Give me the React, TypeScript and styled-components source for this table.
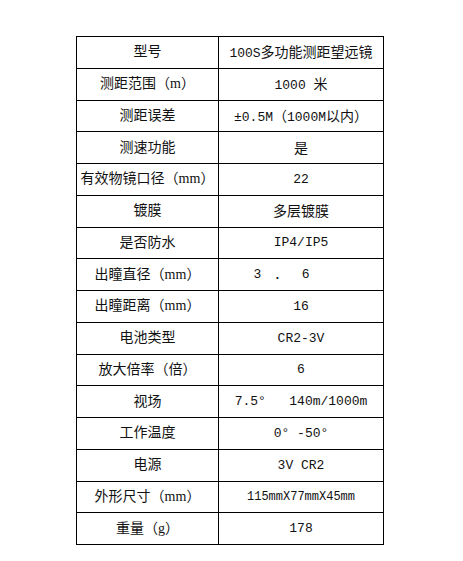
import React from 'react';
import styled, { createGlobalStyle } from 'styled-components';

const GlobalStyle = createGlobalStyle`
  html, body {
    margin: 0;
    padding: 0;
    background: #fff;
  }
`;

const Page = styled.div`
  width: 463px;
  height: 561px;
  padding: 36px 0 0 76px;
  box-sizing: border-box;
  background: #fff;
`;

const SpecTable = styled.table`
  width: 308px;
  border-collapse: collapse;
  table-layout: fixed;
  color: #111;
`;

const Row = styled.tr`
  height: 31.75px;
`;

const LabelCell = styled.td`
  width: 141px;
  padding: 0;
  border: 1px solid #000;
  text-align: center;
  font-family: 'Liberation Serif', 'Noto Sans CJK SC', serif;
  font-size: 14px;
  line-height: 1;
  white-space: nowrap;
`;

const ValueCell = styled.td<{ small?: boolean }>`
  padding: 0;
  border: 1px solid #000;
  text-align: center;
  font-family: 'Liberation Mono', 'Noto Sans CJK SC', monospace;
  font-size: ${(props) => (props.small ? '12px' : '13px')};
  line-height: 1;
  white-space: pre;
`;

const CjkText = styled.span`
  font-family: 'Noto Sans CJK SC', sans-serif;
  font-size: 14px;
`;

const specs: { label: string; value: React.ReactNode; small?: boolean }[] = [
  { label: '型号', value: <>100S<CjkText>多功能测距望远镜</CjkText></> },
  { label: '测距范围（m）', value: <>1000 <CjkText>米</CjkText></> },
  { label: '测距误差', value: <>±0.5M<CjkText>（</CjkText>1000M<CjkText>以内）</CjkText></> },
  { label: '测速功能', value: <CjkText>是</CjkText> },
  { label: '有效物镜口径（mm）', value: '22' },
  { label: '镀膜', value: <CjkText>多层镀膜</CjkText> },
  { label: '是否防水', value: 'IP4/IP5' },
  { label: '出瞳直径（mm）', value: '3　．　 6     ' },
  { label: '出瞳距离（mm）', value: '16' },
  { label: '电池类型', value: 'CR2-3V' },
  { label: '放大倍率（倍）', value: '6' },
  { label: '视场', value: '7.5°   140m/1000m' },
  { label: '工作温度', value: '0° -50°' },
  { label: '电源', value: '3V CR2' },
  { label: '外形尺寸（mm）', value: '115mmX77mmX45mm', small: true },
  { label: '重量（g）', value: '178' },
];

function App() {
  return (
    <>
      <GlobalStyle />
      <Page>
        <SpecTable>
          <tbody>
            {specs.map((spec) => (
              <Row key={spec.label}>
                <LabelCell>{spec.label}</LabelCell>
                <ValueCell small={spec.small}>{spec.value}</ValueCell>
              </Row>
            ))}
          </tbody>
        </SpecTable>
      </Page>
    </>
  );
}

export default App;
